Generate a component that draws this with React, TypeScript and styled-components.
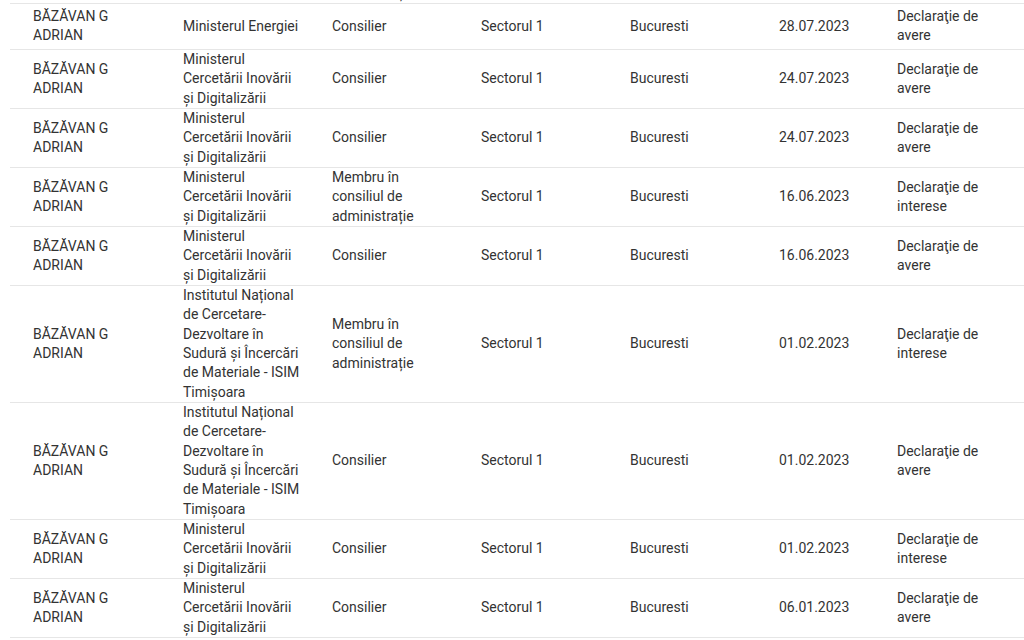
import React from 'react'
import styled, { createGlobalStyle } from 'styled-components'

const GlobalStyle = createGlobalStyle`
  html, body {
    margin: 0;
    padding: 0;
    background: #ffffff;
  }
  body {
    font-family: Roboto, "Noto Sans", Arial, sans-serif;
  }
`

const Page = styled.div`
  height: 640px;
  overflow: hidden;
  padding-left: 10px;
  background: #fff;
`

// the list is scrolled: the previous row is mostly above the top edge
const Table = styled.table`
  margin-top: -55px;
  width: 1034px;
  border-collapse: collapse;
  table-layout: fixed;
  font-size: 14px;
  line-height: 19.33px;
  color: #333333;
`

const Col = styled.col<{ $w: number }>`
  width: ${p => p.$w}px;
`

const Cell = styled.td<{ $padRight?: number }>`
  height: 45px;
  padding: 0 ${p => p.$padRight ?? 7}px 0 23px;
  border-bottom: 1px solid #e6e6e6;
  vertical-align: middle;
  text-align: left;
  font-weight: 400;
`

type Row = {
  name: string
  institution: string
  role: string
  sector: string
  city: string
  date: string
  kind: string
}

const MCID = 'Ministerul Cercetării Inovării și Digitalizării'
const INCD = 'Institutul Național de Cercetare-Dezvoltare în Sudură și Încercări de Materiale - ISIM Timișoara'
const BOARD = 'Membru în consiliul de administrație'
const AVERE = 'Declaraţie de avere'
const INTERESE = 'Declaraţie de interese'

const make = (institution: string, role: string, date: string, kind: string): Row => ({
  name: 'BĂZĂVAN G ADRIAN',
  institution,
  role,
  sector: 'Sectorul 1',
  city: 'Bucuresti',
  date,
  kind,
})

const rows: Row[] = [
  make('Ministerul Energiei', BOARD, '28.07.2023', INTERESE),
  make('Ministerul Energiei', 'Consilier', '28.07.2023', AVERE),
  make(MCID, 'Consilier', '24.07.2023', AVERE),
  make(MCID, 'Consilier', '24.07.2023', AVERE),
  make(MCID, BOARD, '16.06.2023', INTERESE),
  make(MCID, 'Consilier', '16.06.2023', AVERE),
  make(INCD, BOARD, '01.02.2023', INTERESE),
  make(INCD, 'Consilier', '01.02.2023', AVERE),
  make(MCID, 'Consilier', '01.02.2023', INTERESE),
  make(MCID, 'Consilier', '06.01.2023', AVERE),
  make(MCID, BOARD, '06.01.2023', INTERESE),
]

const widths = [150, 149, 149, 149, 149, 118, 170]

export default function App() {
  return (
    <>
      <GlobalStyle />
      <Page>
        <Table>
          <colgroup>
            {widths.map((w, i) => (
              <Col key={i} $w={w} />
            ))}
          </colgroup>
          <tbody>
            {rows.map((r, i) => (
              <tr key={i}>
                <Cell>{r.name}</Cell>
                <Cell>{r.institution}</Cell>
                <Cell>{r.role}</Cell>
                <Cell>{r.sector}</Cell>
                <Cell>{r.city}</Cell>
                <Cell>{r.date}</Cell>
                <Cell $padRight={60}>{r.kind}</Cell>
              </tr>
            ))}
          </tbody>
        </Table>
      </Page>
    </>
  )
}
